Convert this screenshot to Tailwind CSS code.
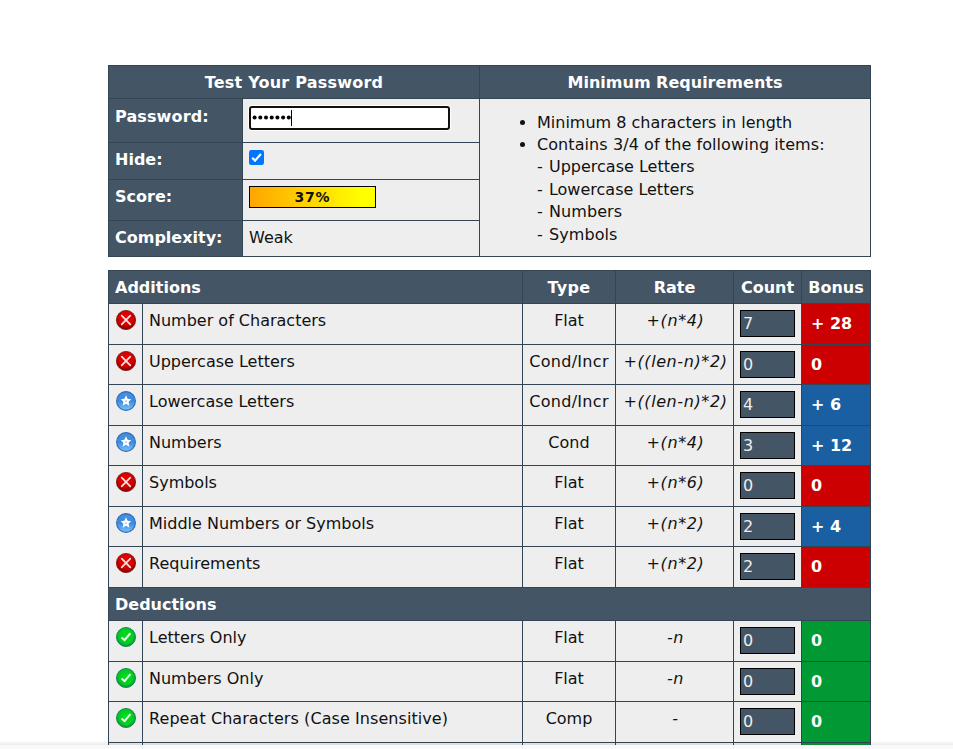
<!DOCTYPE html>
<html lang="en">
<head>
<meta charset="utf-8">
<title>Password Meter</title>
<script src="https://cdn.jsdelivr.net/npm/@tailwindcss/browser@4"></script>
</head>
<body class="bg-white">
<svg class="absolute h-0 w-0">
  <defs>
    <radialGradient id="red" cx=".5" cy=".4" r=".62"><stop offset="0" stop-color="#f00000"/><stop offset=".6" stop-color="#d40000"/><stop offset="1" stop-color="#700"/></radialGradient>
    <linearGradient id="blue" x1="0" y1="0" x2="0" y2="1"><stop offset="0" stop-color="#4a90dc"/><stop offset=".5" stop-color="#3c8ae0"/><stop offset="1" stop-color="#7cc4fa"/></linearGradient>
    <radialGradient id="green" cx=".5" cy=".45" r=".6"><stop offset="0" stop-color="#00e020"/><stop offset=".65" stop-color="#00cc20"/><stop offset="1" stop-color="#087a48"/></radialGradient>
    <symbol id="fail" viewBox="0 0 20 20"><circle cx="10" cy="10" r="9.6" fill="url(#red)" stroke="#7a1010" stroke-width=".8"/><path d="M5.7 5.7 14.3 14.3M14.3 5.7 5.7 14.3" stroke="#f4e4e4" stroke-width="1.7" stroke-linecap="round"/></symbol>
    <symbol id="star" viewBox="0 0 20 20"><circle cx="10" cy="10" r="9.4" fill="url(#blue)" stroke="#2c6ab8" stroke-width="1.1"/><path d="M10 4.2 11.6 7.8 15.3 8.2 12.6 10.8 13.4 14.8 10 12.8 6.6 14.8 7.4 10.8 4.7 8.2 8.4 7.8Z" fill="#fff"/><circle cx="10" cy="10.1" r=".9" fill="#8fc0f2"/></symbol>
    <symbol id="pass" viewBox="0 0 20 20"><circle cx="10" cy="10" r="9.5" fill="url(#green)" stroke="#0b8050" stroke-width=".9"/><path d="M5.5 10.4 8.6 13.1 14.4 6.2" fill="none" stroke="#f2fff2" stroke-width="2"/></symbol>
  </defs>
</svg>
<main class="flex h-[749px] flex-col overflow-hidden font-['DejaVu_Sans',sans-serif] text-[16px] text-[#111]">
  <div class="h-[745px] shrink-0 overflow-hidden pt-[65px] pl-[108px]">
    <section class="grid w-[763px] grid-cols-[133px_236px_390px] grid-rows-[32px_43px_36px_40px_35px] gap-px bg-[#334455] p-px">
      <h2 class="col-span-2 bg-[#445566] text-center font-bold leading-[34px] tracking-[0.22px] text-white">Test Your Password</h2>
      <h2 class="bg-[#445566] text-center font-bold leading-[34px] text-white">Minimum Requirements</h2>
      <div class="bg-[#445566] pt-[7px] pl-1.5 font-bold leading-[22px] tracking-[0.12px] text-white">Password:</div>
      <div class="bg-[#eee] pt-[7px] pl-1.5">
        <div class="flex h-6 w-[201px] items-center rounded-[3px] border-2 border-[#101010] bg-white pl-px ring-1 ring-white">
          <svg class="h-4 w-[40px]" viewBox="0 0 40 16" fill="#000"><circle cx="2.6" cy="7.5" r="2"/><circle cx="8.3" cy="7.5" r="2"/><circle cx="14" cy="7.5" r="2"/><circle cx="19.7" cy="7.5" r="2"/><circle cx="25.4" cy="7.5" r="2"/><circle cx="31.1" cy="7.5" r="2"/><circle cx="36.8" cy="7.5" r="2"/><path d="M39 0h1v16h-1z"/></svg>
        </div>
      </div>
      <div class="row-span-4 bg-[#eee] pt-[12.6px] pl-[57px]">
        <ul class="list-disc leading-[22.4px]">
          <li>Minimum 8 characters in length</li>
          <li class="tracking-[0.08px]">Contains 3/4 of the following items:<br>-<span class="pl-px tracking-normal"> Uppercase Letters</span><br>-<span class="pl-px tracking-normal"> Lowercase Letters</span><br>-<span class="pl-px"> Numbers</span><br>-<span class="pl-px"> Symbols</span></li>
        </ul>
      </div>
      <div class="bg-[#445566] pt-1.5 pl-1.5 font-bold leading-[22px] text-white">Hide:</div>
      <div class="bg-[#eee] pt-[7px] pl-1.5"><svg class="h-[15px] w-[15px]" viewBox="0 0 15 15"><rect width="15" height="15" rx="2.3" fill="#0075ff"/><path d="M3.2 7.8 6 10.6 11.9 4" fill="none" stroke="#fff" stroke-width="2.1"/></svg></div>
      <div class="bg-[#445566] pt-1.5 pl-1.5 font-bold leading-[22px] text-white">Score:</div>
      <div class="bg-[#eee] pt-1.5 pl-1.5"><div class="h-[22px] w-[127px] border border-black bg-linear-to-r from-[#ffa500] to-[#ffff00] to-90% text-center text-[14px] font-bold leading-[20px] tracking-[0.8px]">37%</div></div>
      <div class="bg-[#445566] pt-1.5 pl-1.5 font-bold leading-[22px] text-white">Complexity:</div>
      <div class="bg-[#eee] pt-1.5 pl-1.5 leading-[22px]">Weak</div>
    </section>

    <section id="scores" class="mt-[13px] grid w-[763px] grid-cols-[33px_379px_92px_117px_67px_68px] grid-rows-[32px_40px_39px_40px_39px_40px_39px_40px_32px_40px_39px_40px_39px] gap-px bg-[#334455] p-px">
      <h2 class="col-span-2 bg-[#445566] pl-1.5 font-bold leading-[34px] text-white">Additions</h2>
      <h2 class="bg-[#445566] text-center font-bold leading-[34px] tracking-[0.3px] text-white">Type</h2>
      <h2 class="bg-[#445566] text-center font-bold leading-[34px] text-white">Rate</h2>
      <h2 class="bg-[#445566] text-center font-bold leading-[34px] text-white">Count</h2>
      <h2 class="bg-[#445566] text-center font-bold leading-[34px] text-white">Bonus</h2>
    </section>
  </div>
  <footer class="relative h-1 shrink-0 bg-[#f9f9f9]"><div class="absolute inset-x-0 -top-1 h-1 bg-linear-to-b from-black/0 to-black/8"></div></footer>
</main>
<script>
const tone = { fail: 'bg-[#cc0000]', star: 'bg-[#1b5fa3]', pass: 'bg-[#009933]' };
const additions = [
  ['fail', 'Number of Characters', 'Flat', '+(n*4)', 7, '+ 28'],
  ['fail', 'Uppercase Letters', 'Cond/Incr', '+((len-n)*2)', 0, '0'],
  ['star', 'Lowercase Letters', 'Cond/Incr', '+((len-n)*2)', 4, '+ 6'],
  ['star', 'Numbers', 'Cond', '+(n*4)', 3, '+ 12'],
  ['fail', 'Symbols', 'Flat', '+(n*6)', 0, '0'],
  ['star', 'Middle Numbers or Symbols', 'Flat', '+(n*2)', 2, '+ 4'],
  ['fail', 'Requirements', 'Flat', '+(n*2)', 2, '0'],
];
const deductions = [
  ['pass', 'Letters Only', 'Flat', '-n', 0, '0'],
  ['pass', 'Numbers Only', 'Flat', '-n', 0, '0'],
  ['pass', 'Repeat Characters (Case Insensitive)', 'Comp', '-', 0, '0'],
  ['pass', '', '', '', '', ''],
];
const row = ([s, name, type, rate, count, bonus]) => `
  <div class="bg-[#eee] pt-1.5 pl-[7px]">${name && `<svg class="h-5 w-5"><use href="#${s}"/></svg>`}</div>
  <div class="bg-[#eee] pt-1.5 pl-1.5 leading-[22px] ${name.length > 30 ? 'tracking-[0.07px]' : ''}">${name}</div>
  <div class="bg-[#eee] pt-1.5 text-center leading-[22px] ${type.length > 5 ? 'tracking-[0.3px]' : ''}">${type}</div>
  <div class="bg-[#eee] pt-1.5 pl-[2px] text-center italic leading-[22px] tracking-[0.6px]">${rate}</div>
  <div class="bg-[#eee] pt-1.5 pl-1.5">${name && `<div class="h-[27px] w-[55px] border border-black bg-[#445566] pl-[2px] leading-[25px] text-[#eee]">${count}</div>`}</div>
  <div class="${tone[s]} pl-[9px] pt-2 font-bold leading-[23px] text-white">${bonus}</div>`;
document.getElementById('scores').insertAdjacentHTML('beforeend',
  additions.map(row).join('') +
  '<h2 class="col-span-6 bg-[#445566] pl-1.5 font-bold leading-[34px] text-white">Deductions</h2>' +
  deductions.map(row).join(''));
</script>
</body>
</html>
